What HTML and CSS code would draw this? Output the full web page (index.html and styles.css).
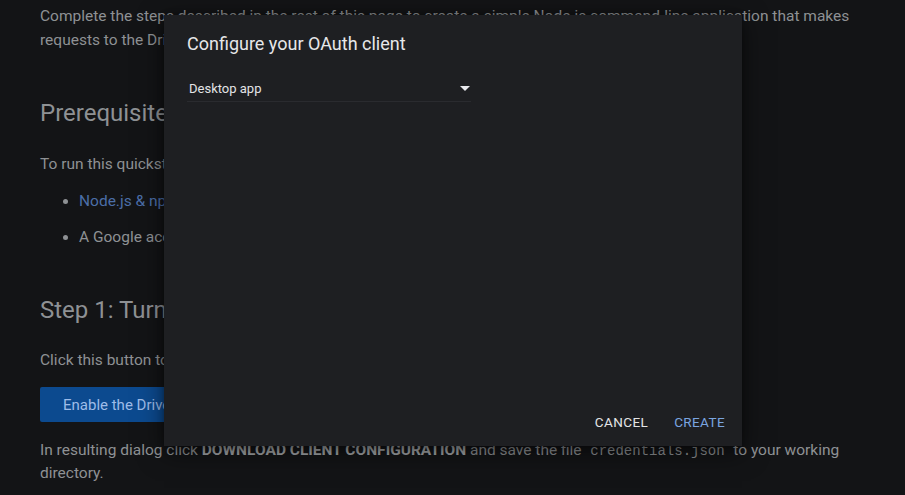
FILE: index.html
```html
<!DOCTYPE html>
<html lang="en">
<head>
<meta charset="utf-8">
<title>Node.js quickstart</title>
<link rel="stylesheet" href="styles.css">
</head>
<body>
<main class="page">
  <p class="para first">Complete the steps described in the rest of this page to create a simple Node.js command-line application that makes requests to the Drive API.</p>
  <h2 class="heading">Prerequisites</h2>
  <p class="para">To run this quickstart, you need the following prerequisites:</p>
  <ul class="list">
    <li><a class="link" href="#">Node.js &amp; npm</a> installed.</li>
    <li>A Google account with Google Drive enabled.</li>
  </ul>
  <h2 class="heading step">Step 1: Turn on the Drive API</h2>
  <p class="para">Click this button to create a new Cloud Platform project and automatically enable the Drive API:</p>
  <button class="enable">Enable the Drive API</button>
  <p class="para last">In resulting dialog click <b>DOWNLOAD CLIENT CONFIGURATION</b> and save the file `<code>credentials.json</code>` to your working directory.</p>
</main>

<div class="dialog">
  <h3 class="dialog-title">Configure your OAuth client</h3>
  <div class="select">
    <span class="select-value">Desktop app</span>
    <svg class="select-arrow" width="10" height="5" viewBox="0 0 10 5"><path d="M0 0h10L5 5z" fill="#e8eaed"/></svg>
  </div>
  <div class="spacer"></div>
  <div class="actions">
    <button class="btn cancel">CANCEL</button>
    <button class="btn create">CREATE</button>
  </div>
</div>
</body>
</html>
```

FILE: styles.css
```css
html, body {
  margin: 0;
  padding: 0;
}
body {
  background: #131416;
  width: 905px;
  height: 495px;
  overflow: hidden;
  font-family: Roboto, "Noto Sans", sans-serif;
  color: #8e9194;
}
.page {
  width: 830px;
  padding: 4px 0 0 40px;
}
.para {
  margin: 0;
  font-size: 15.5px;
  line-height: 24px;
}
.heading {
  margin: 45px 0 23px;
  font-size: 24px;
  font-weight: 400;
  line-height: 32px;
  color: #8e9194;
}
.heading.step {
  margin-top: 45px;
  margin-bottom: 22px;
}
.list {
  margin: 13px 0 0;
  padding: 0 0 0 39px;
  font-size: 15.5px;
  line-height: 24px;
}
.list li {
  margin-bottom: 12px;
}
.list li::marker {
  color: #8e9194;
}
.link {
  color: #4b6ea8;
  text-decoration: none;
}
.enable {
  display: block;
  margin: 15px 0 0;
  height: 35px;
  padding: 0 23px;
  border: 0;
  border-radius: 2px;
  background: #0c4a8f;
  color: #9ebce8;
  font-family: Roboto, sans-serif;
  font-size: 15px;
}
.para.last {
  margin-top: 17px;
  line-height: 22px;
  width: 810px;
}
.para b {
  font-weight: 700;
  color: #a6a9ac;
}
.para code {
  font-family: "Liberation Mono", "DejaVu Sans Mono", monospace;
  font-size: 14px;
}

.dialog {
  position: absolute;
  left: 164px;
  top: 15px;
  width: 578px;
  height: 431px;
  box-sizing: border-box;
  padding: 17px 9px 6px 23px;
  background: #1e1f22;
  box-shadow: 0 6px 24px rgba(0, 0, 0, 0.55), 0 0 6px rgba(0, 0, 0, 0.3);
  display: flex;
  flex-direction: column;
}
.dialog-title {
  margin: 0;
  font-size: 18px;
  font-weight: 400;
  line-height: 24px;
  color: #e6e7e9;
}
.select {
  margin-top: 20px;
  width: 284px;
  height: 26px;
  display: flex;
  align-items: center;
  justify-content: space-between;
  border-bottom: 1px solid #2a2b2f;
  padding-left: 2px;
  box-sizing: border-box;
}
.select-value {
  font-size: 13px;
  color: #e3e4e6;
}
.select-arrow {
  margin-right: 1px;
}
.spacer {
  flex: 1;
}
.actions {
  display: flex;
  justify-content: flex-end;
  gap: 10px;
}
.btn {
  background: none;
  border: 0;
  height: 36px;
  padding: 0 8px;
  font-family: Roboto, sans-serif;
  font-size: 13.5px;
  letter-spacing: 0.4px;
  cursor: pointer;
}
.cancel {
  color: #e3e4e6;
}
.create {
  color: #7aa5e0;
}
```
